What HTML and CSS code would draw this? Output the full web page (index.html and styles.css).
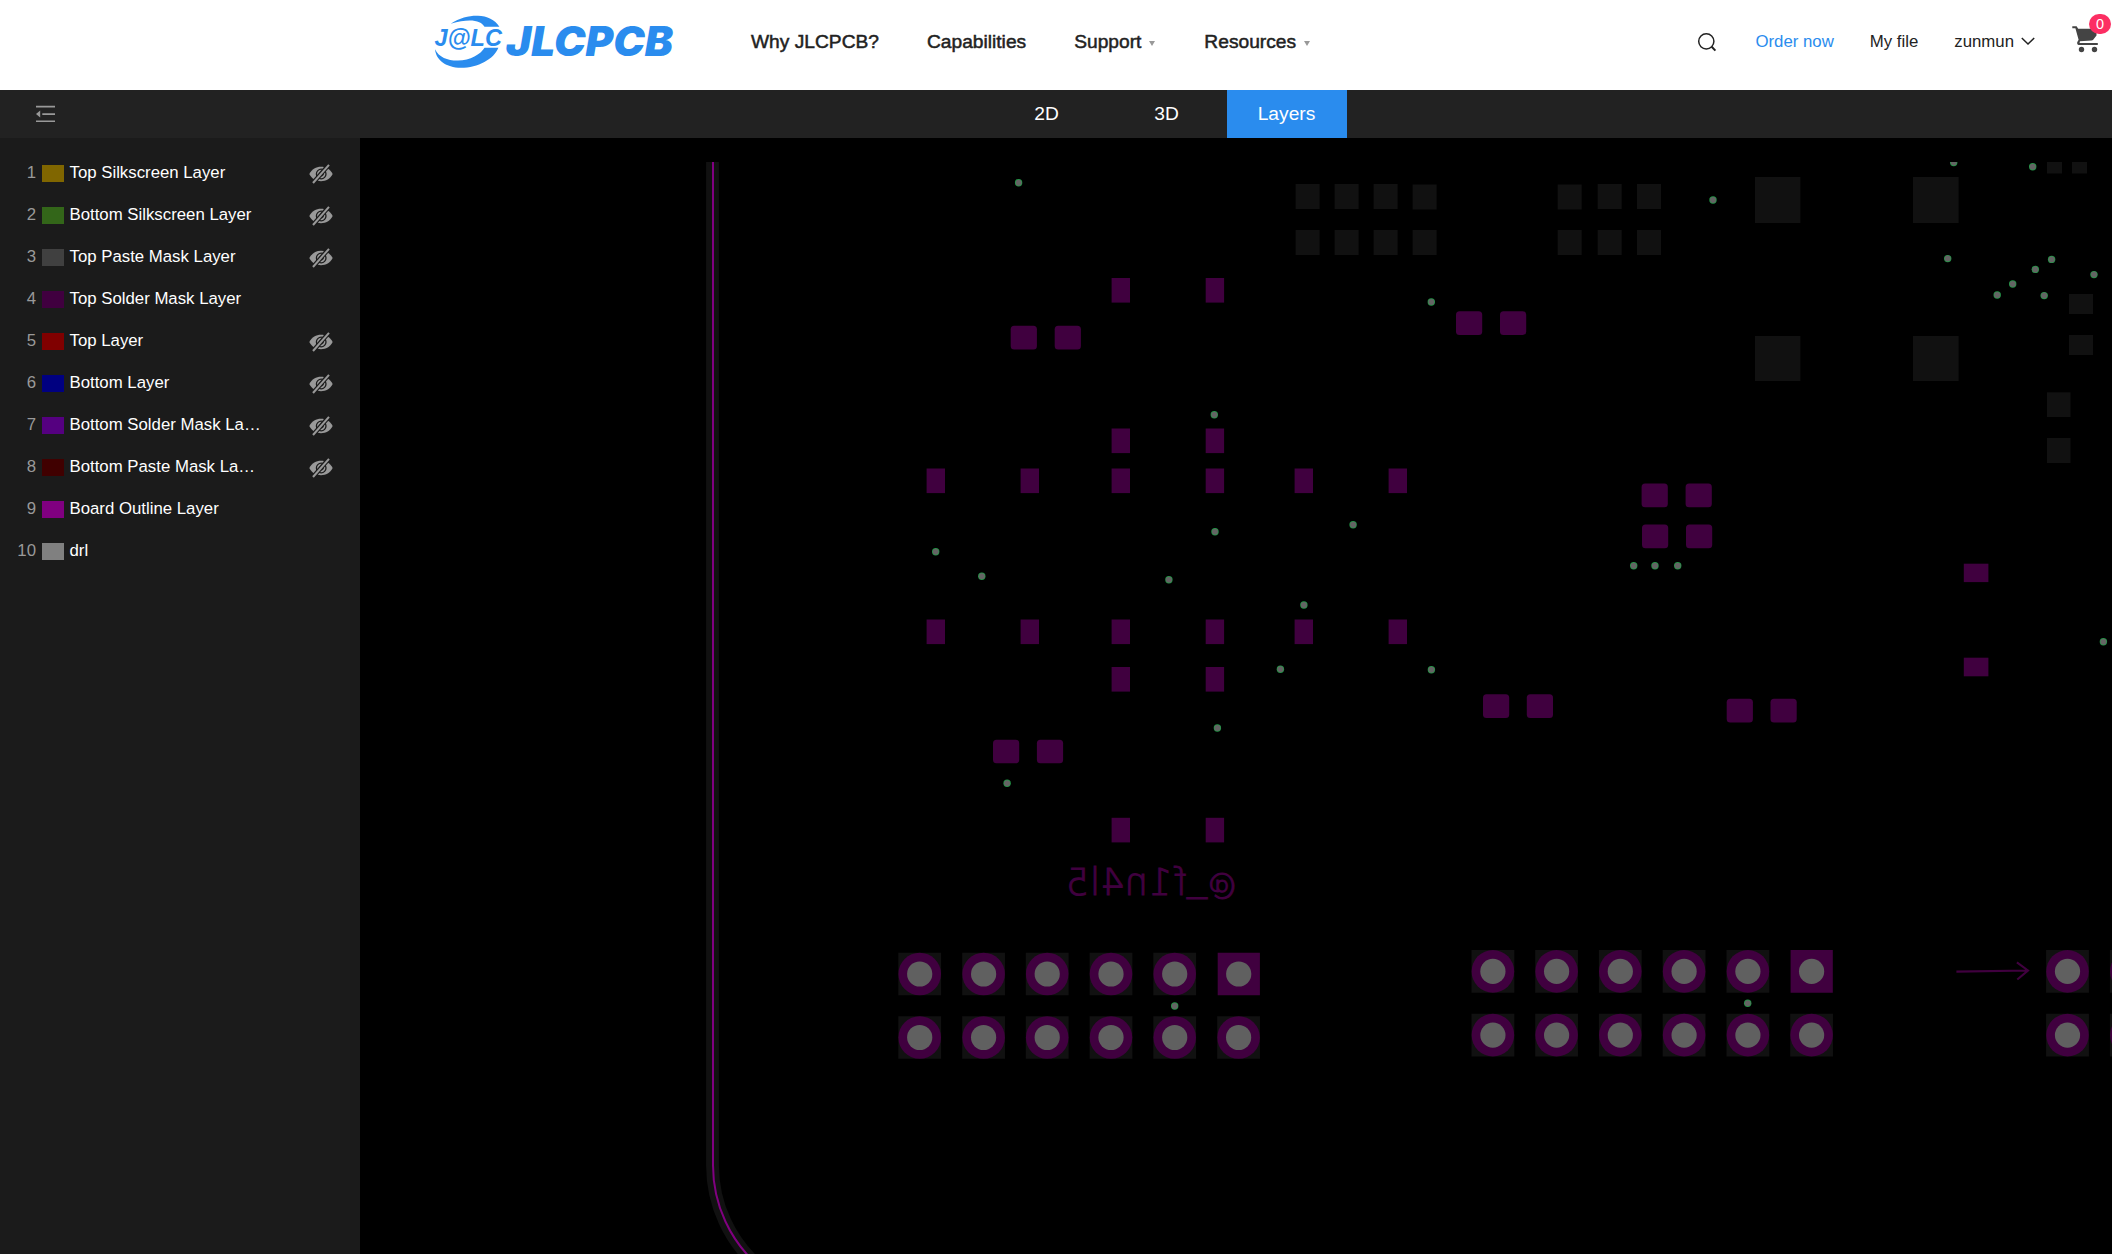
FILE: index.html
```html
<!DOCTYPE html>
<html lang="en">
<head>
<meta charset="utf-8">
<title>JLCPCB Gerber Viewer</title>
<link rel="stylesheet" href="styles.css">
</head>
<body>
<svg class="defs" width="0" height="0" aria-hidden="true">
  <defs>
    <symbol id="eye-off" viewBox="0 0 24 20">
      <path d="M0.3 10C3 5.2 7 2.8 12 2.8S21 5.2 23.7 10C21 14.8 17 17.2 12 17.2S3 14.8 0.3 10Z" fill="#999"/>
      <circle cx="12.2" cy="10" r="4.800" fill="none" stroke="#1b1b1b" stroke-width="1.3"/>
      <circle cx="12.4" cy="10" r="2" fill="none" stroke="#1b1b1b" stroke-width="1"/>
      <path d="M3.6 19.5L19.4 1.2" stroke="#1b1b1b" stroke-width="4.400"/>
      <path d="M4 19L20 .8" stroke="#999" stroke-width="2"/>
    </symbol>
    <rect id="v" width="18.4" height="24.6"/>
    <rect id="r" width="26.2" height="23.6" rx="3.5"/>
    <rect id="s" width="24" height="25"/>
    <g id="via"><circle r="3.7" fill="#1f9a45"/><circle r="3" fill="#646464"/></g>
    <g id="pin"><path d="M-21.4-21.3h42.8v42.6h-42.8z" fill="#111"/><circle r="21.3" fill="#40003f"/><circle r="12.6" fill="#606060"/></g>
    <g id="pin1"><path d="M-21-21.3h42.2v42.6h-42.2z" fill="#40003f"/><circle r="12.6" fill="#606060"/></g>
  </defs>
</svg>

<header class="header">
  <a class="logo">
    <svg width="246" height="60" viewBox="430 12 246 60">
      <g fill="#2a8cee">
        <path d="M450.7 23.8C460 17.500 470 15.500 478 15.800C487 16.200 495 19.500 499.400 26.800H484.500C481 20.500 470 18 450.700 23.800Z"/>
        <path d="M435 49.300C436 60 446 67.800 461 67.800C478 67.800 494 59 498.400 47.700H484.500C481 54 470 60.500 458 60.600C448 60.800 439 57.500 435 49.300Z"/>
        <text class="logo-mark" x="434.500" y="45.800" textLength="67.500" lengthAdjust="spacingAndGlyphs">J@LC</text>
        <text class="logo-word" x="506" y="56.300" textLength="167" lengthAdjust="spacingAndGlyphs">JLCPCB</text>
      </g>
    </svg>
  </a>
  <nav class="nav">
    <a>Why JLCPCB?</a>
    <a>Capabilities</a>
    <a>Support<i class="caret"></i></a>
    <a>Resources<i class="caret"></i></a>
  </nav>
  <div class="account">
    <svg class="search" width="20" height="20" viewBox="0 0 20 20" fill="none" stroke="#222" stroke-width="1.500"><circle cx="9.300" cy="9.300" r="7.600"/><path d="M14.700 14.700L18.400 18.600" stroke-width="2"/></svg>
    <a class="order">Order now</a>
    <a class="file">My file</a>
    <a class="user">zunmun<svg width="14" height="9" viewBox="0 0 14 9" fill="none" stroke="#222" stroke-width="1.500"><path d="M.8 1L7 7L13.200 1"/></svg></a>
    <div class="cart">
      <svg width="27" height="27" viewBox="0 0 27 27" fill="#444"><path d="M0.300 .3H4.600L6.200 2.800H24.500V9.500L21.200 13.800Q20.600 14.500 19.500 14.600L8 15.200Q7 16.600 8 17H25.800V19H7.500C5 19 4.600 16.600 5.900 14.900L6.600 13.700L3.400 2.300H.3Z"/><circle cx="9.500" cy="23.500" r="2.700"/><circle cx="22.500" cy="23.500" r="2.700"/></svg>
      <span class="badge">0</span>
    </div>
  </div>
</header>

<div class="toolbar">
  <svg class="collapse" width="20" height="18" viewBox="0 0 20 18" fill="#999"><path d="M0 .8h19v1.700H0zM6.300 8.200h12.700v1.700H6.300zM0 15.400h19v1.700H0zM4.200 5.600v7L0 9.100z"/></svg>
  <div class="tabs"><a class="tab">2D</a><a class="tab">3D</a><a class="tab active">Layers</a></div>
</div>

<main class="main">
  <ul class="layers">
    <li><span class="num">1</span><i class="swatch silk-top"></i><span class="name">Top Silkscreen Layer</span><svg class="eye"><use href="#eye-off"/></svg></li>
    <li><span class="num">2</span><i class="swatch silk-bottom"></i><span class="name">Bottom Silkscreen Layer</span><svg class="eye"><use href="#eye-off"/></svg></li>
    <li><span class="num">3</span><i class="swatch paste-top"></i><span class="name">Top Paste Mask Layer</span><svg class="eye"><use href="#eye-off"/></svg></li>
    <li><span class="num">4</span><i class="swatch mask-top"></i><span class="name">Top Solder Mask Layer</span></li>
    <li><span class="num">5</span><i class="swatch copper-top"></i><span class="name">Top Layer</span><svg class="eye"><use href="#eye-off"/></svg></li>
    <li><span class="num">6</span><i class="swatch copper-bottom"></i><span class="name">Bottom Layer</span><svg class="eye"><use href="#eye-off"/></svg></li>
    <li><span class="num">7</span><i class="swatch mask-bottom"></i><span class="name">Bottom Solder Mask La…</span><svg class="eye"><use href="#eye-off"/></svg></li>
    <li><span class="num">8</span><i class="swatch paste-bottom"></i><span class="name">Bottom Paste Mask La…</span><svg class="eye"><use href="#eye-off"/></svg></li>
    <li><span class="num">9</span><i class="swatch outline"></i><span class="name">Board Outline Layer</span></li>
    <li><span class="num">10</span><i class="swatch drill"></i><span class="name">drl</span></li>
  </ul>

  <section class="board">
    <svg width="1752" height="1092" viewBox="360 162 1752 1092">
      <!-- board outline -->
      <path d="M712.500 150V1165A134 134 0 0 0 760 1267.500" fill="none" stroke="#111" stroke-width="12.800"/>
      <path d="M713 150V1165A134 134 0 0 0 760.500 1267.500" fill="none" stroke="#800080" stroke-width="2"/>

      <!-- connector cut-outs -->
      <g fill="#111">
        <use href="#s" x="1295.600" y="184"/><use href="#s" x="1334.600" y="184"/><use href="#s" x="1373.600" y="184"/><use href="#s" x="1412.600" y="184.500"/>
        <use href="#s" x="1295.600" y="230"/><use href="#s" x="1334.600" y="230"/><use href="#s" x="1373.600" y="230"/><use href="#s" x="1412.600" y="230"/>
        <use href="#s" x="1557.700" y="184.500"/><use href="#s" x="1597.700" y="184"/><use href="#s" x="1637" y="184"/>
        <use href="#s" x="1557.700" y="230"/><use href="#s" x="1597.700" y="230"/><use href="#s" x="1637" y="230"/>
        <rect x="1755" y="177" width="45.400" height="46"/><rect x="1913" y="177" width="45.600" height="46"/>
        <rect x="1755" y="336" width="45.400" height="45"/><rect x="1913" y="336" width="45.600" height="45"/>
        <rect x="2047" y="160" width="15" height="13.500"/><rect x="2072" y="160" width="15" height="13.500"/>
        <rect x="2069" y="294" width="24" height="20"/><rect x="2069" y="335" width="24" height="20"/>
        <rect x="2047" y="392.300" width="23.500" height="24.700"/><rect x="2047" y="438" width="23.500" height="25"/>
      </g>

      <!-- solder mask openings -->
      <g fill="#40003f">
        <use href="#v" x="1111.600" y="278"/><use href="#v" x="1205.700" y="278"/>
        <use href="#v" x="1111.600" y="428.500"/><use href="#v" x="1205.700" y="428.500"/>
        <use href="#v" x="926.600" y="468.500"/><use href="#v" x="1020.600" y="468.500"/><use href="#v" x="1111.600" y="468.500"/><use href="#v" x="1205.700" y="468.500"/><use href="#v" x="1294.600" y="468.500"/><use href="#v" x="1388.600" y="468.500"/>
        <use href="#v" x="926.600" y="619.500"/><use href="#v" x="1020.600" y="619.500"/><use href="#v" x="1111.600" y="619.500"/><use href="#v" x="1205.700" y="619.500"/><use href="#v" x="1294.600" y="619.500"/><use href="#v" x="1388.600" y="619.500"/>
        <use href="#v" x="1111.600" y="667"/><use href="#v" x="1205.700" y="667"/>
        <use href="#v" x="1111.600" y="817.800"/><use href="#v" x="1205.700" y="817.800"/>
        <use href="#r" x="1010.700" y="325.800"/><use href="#r" x="1054.700" y="325.800"/>
        <use href="#r" x="993" y="739.700"/><use href="#r" x="1036.900" y="739.700"/>
        <use href="#r" x="1456" y="311.300"/><use href="#r" x="1500" y="311.300"/>
        <use href="#r" x="1641.600" y="483.600"/><use href="#r" x="1685.600" y="483.600"/>
        <use href="#r" x="1642" y="524.600"/><use href="#r" x="1686" y="524.600"/>
        <use href="#r" x="1483" y="694.300"/><use href="#r" x="1526.800" y="694.300"/>
        <use href="#r" x="1726.700" y="698.800"/><use href="#r" x="1770.500" y="698.800"/>
        <rect x="1963.800" y="563.700" width="24.600" height="18.400"/><rect x="1963.800" y="657.700" width="24.600" height="18.600"/>
      </g>
      <path d="M1956.400 971.600L2028 970.500M2016.900 962.300L2028 970.500L2017.300 979.500" fill="none" stroke="#40003f" stroke-width="2.100"/>

      <!-- bottom-side label, seen mirrored from the top -->
      <g class="label" transform="translate(1236 895) scale(-1 1)">
        <text class="at" x="-1" y="-2">@</text>
        <text y="-6 0" x="29 49 64 88 112 136 147"><tspan class="bar">_</tspan>f1n4l5</text>
      </g>

      <!-- pin headers -->
      <use href="#pin" x="919.700" y="974"/><use href="#pin" x="983.600" y="974"/><use href="#pin" x="1047.200" y="974"/><use href="#pin" x="1111" y="974"/><use href="#pin" x="1174.700" y="974"/><use href="#pin1" x="1238.700" y="974"/>
      <use href="#pin" x="919.700" y="1037.500"/><use href="#pin" x="983.600" y="1037.500"/><use href="#pin" x="1047.200" y="1037.500"/><use href="#pin" x="1111" y="1037.500"/><use href="#pin" x="1174.700" y="1037.500"/><use href="#pin" x="1238.600" y="1037.500"/>
      <use href="#pin" x="1492.900" y="971.400"/><use href="#pin" x="1556.600" y="971.400"/><use href="#pin" x="1620.300" y="971.400"/><use href="#pin" x="1684.100" y="971.400"/><use href="#pin" x="1747.900" y="971.400"/><use href="#pin1" x="1811.600" y="971.400"/>
      <use href="#pin" x="1492.900" y="1035.100"/><use href="#pin" x="1556.600" y="1035.100"/><use href="#pin" x="1620.300" y="1035.100"/><use href="#pin" x="1684.100" y="1035.100"/><use href="#pin" x="1747.900" y="1035.100"/><use href="#pin" x="1811.600" y="1035.100"/>
      <use href="#pin" x="2067.500" y="971.400"/><use href="#pin" x="2131.300" y="971.400"/><use href="#pin" x="2067.500" y="1035.100"/><use href="#pin" x="2131.300" y="1035.100"/>

      <!-- drilled vias -->
      <use href="#via" x="1018.600" y="182.700"/><use href="#via" x="1214.300" y="414.700"/><use href="#via" x="935.700" y="551.700"/><use href="#via" x="981.800" y="576.300"/>
      <use href="#via" x="1168.900" y="579.700"/><use href="#via" x="1215" y="531.700"/><use href="#via" x="1353.100" y="524.700"/><use href="#via" x="1303.900" y="605"/>
      <use href="#via" x="1280.400" y="669.200"/><use href="#via" x="1431.400" y="669.700"/><use href="#via" x="1217.400" y="728"/><use href="#via" x="1007.100" y="783.300"/>
      <use href="#via" x="1174.700" y="1006"/><use href="#via" x="1431.300" y="302"/><use href="#via" x="1633.700" y="565.700"/><use href="#via" x="1655" y="565.700"/><use href="#via" x="1677.700" y="565.700"/>
      <use href="#via" x="1953.700" y="162.500"/><use href="#via" x="2032.700" y="166.800"/><use href="#via" x="1713" y="200"/><use href="#via" x="1947.700" y="258.600"/>
      <use href="#via" x="1997.200" y="295"/><use href="#via" x="2012.700" y="284"/><use href="#via" x="2035.300" y="269.400"/><use href="#via" x="2051.600" y="259.400"/>
      <use href="#via" x="2044.200" y="295.600"/><use href="#via" x="2094" y="274.600"/><use href="#via" x="2103.400" y="641.800"/><use href="#via" x="1747.700" y="1003.300"/>
    </svg>
  </section>
</main>
</body>
</html>
```

FILE: styles.css
```css
* { box-sizing: border-box; }

body {
  margin: 0;
  height: 100vh;
  display: flex;
  flex-direction: column;
  overflow: hidden;
  background: #000;
  font-family: "Liberation Sans", Arial, sans-serif;
}

.defs { position: absolute; }

/* Header */
.header {
  flex: none;
  height: 90px;
  display: flex;
  align-items: center;
  background: #fff;
  color: #222;
  padding-left: 430px;
  white-space: nowrap;
}

.logo { display: flex; margin-top: -6px; }
.logo-mark { font: italic 700 24px "Liberation Sans", Arial, sans-serif; }
.logo-word { font: italic 900 41px Inter, "Liberation Sans", sans-serif; }

.nav {
  display: flex;
  gap: 48px;
  margin-left: 75px;
  font-size: 19.2px;
  line-height: 22px;
  margin-top: -7px;
  -webkit-text-stroke: 0.5px #222;
}
.nav a { display: flex; align-items: center; }

.caret {
  margin: 4px 1px 0 8px;
  border: 3px solid transparent;
  border-top: 5px solid #999;
  border-bottom: 0;
}

.account {
  display: flex;
  align-items: center;
  margin-left: auto;
  margin-top: -7px;
  font-size: 16.8px;
  line-height: 20px;
}
.order { color: #2a8cee; margin-left: 38px; }
.file { margin-left: 36px; }
.user { display: flex; align-items: center; gap: 7px; margin-left: 36px; }
.cart { position: relative; display: flex; margin-left: 37px; padding-right: 13px; margin-top: -5px; }
.badge {
  position: absolute;
  right: 1px;
  top: -12px;
  width: 22px;
  height: 20px;
  border-radius: 10px;
  background: #fc2e63;
  color: #fff;
  font-size: 14.4px;
  line-height: 20px;
  text-align: center;
}

/* View switcher */
.toolbar {
  flex: none;
  height: 48px;
  display: flex;
  align-items: center;
  background: #222;
  padding-left: 36px;
}
.tabs { display: flex; margin-left: 931px; }
.tab {
  width: 120px;
  height: 48px;
  padding-right: 1px;
  line-height: 47px;
  text-align: center;
  color: #fff;
  font-size: 19.2px;
}
.tab.active { background: #2a8cee; }

/* Layer list */
.main { flex: 1; display: flex; min-height: 0; }
.layers {
  flex: none;
  width: 360px;
  margin: 0;
  padding: 14px 27px 0 0;
  list-style: none;
  background: #1b1b1b;
  color: #fff;
  font-size: 16.8px;
}
.layers li { height: 42px; display: flex; align-items: center; }
.num { width: 36px; text-align: right; color: #999; }
.swatch { width: 22px; height: 17px; margin: 0 5.5px 0 6px; }
.name { white-space: nowrap; }
.eye { width: 24px; height: 20px; margin: 2px 0 0 auto; }

.silk-top { background: #806600; }
.silk-bottom { background: #336619; }
.paste-top { background: #404040; }
.mask-top { background: #40003f; }
.copper-top { background: #800000; }
.copper-bottom { background: #000080; }
.mask-bottom { background: #550080; }
.paste-bottom { background: #400000; }
.outline { background: #800080; }
.drill { background: #808080; }

/* Board */
.board { flex: 1; padding-top: 24px; background: #000; }
.board svg { display: block; }
.label text {
  font: 200 37px "DejaVu Sans", sans-serif;
  fill: #40003f;
  stroke: #40003f;
  stroke-width: 1.1px;
}
.label .at { font-size: 29px; }
.label .bar { font-size: 40px; }
```
